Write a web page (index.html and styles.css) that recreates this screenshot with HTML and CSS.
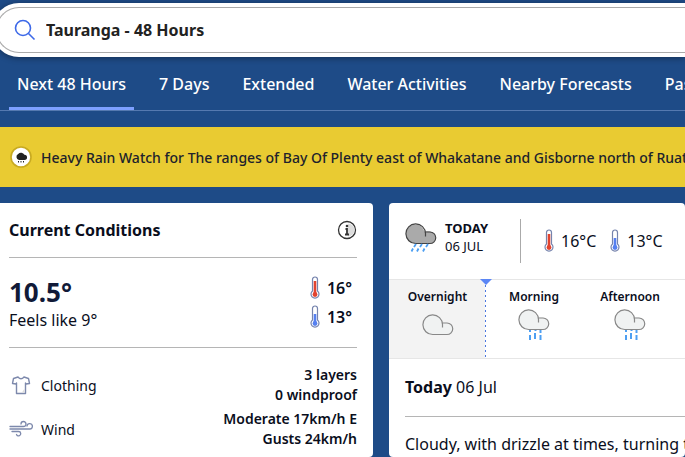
FILE: index.html
```html
<!DOCTYPE html>
<html lang="en">
<head>
    <meta charset="UTF-8">
    <meta name="viewport" content="width=device-width, initial-scale=1.0">
    <title>Tauranga - 48 Hours</title>
    <link rel="stylesheet" href="styles.css">
</head>
<body>
    <svg class="defs" aria-hidden="true">
        <symbol id="cloud" viewBox="0 0 32 22">
            <path d="M10.500 20.500A9.500 9.500 0 1 1 19.500 8.500Q24 7.500 27.500 9.500A6 6 0 0 1 25 20.500Z" stroke="none"/>
            <path d="M20.500 13.500V10.500A9.800 9.800 0 1 0 10.800 20.500H25A5.500 5.500 0 0 0 25 9H20.500" fill="none"/>
        </symbol>
        <symbol id="thermometer" viewBox="0 0 10 24">
            <path d="M2.500 15V3.500a2.500 2.500 0 0 1 5 0V15a4 4 0 1 1-5 0z" fill="#fff" stroke="#7583ad" stroke-width="1.200"/>
            <circle cx="5" cy="18.500" r="2.400" fill="currentColor"/>
        </symbol>
    </svg>
    <div class="page">
        <form class="search" action="#">
            <label class="search-box">
                <svg width="22" height="22" viewBox="0 0 22 22" fill="none" stroke="#3d69e8" stroke-width="1.600" role="img" aria-label="Search">
                    <circle cx="9" cy="9" r="7.500"/>
                    <path d="M14.500 14.500l6 6"/>
                </svg>
                <input type="text" value="Tauranga - 48 Hours">
            </label>
        </form>
        <nav class="tabs">
            <a class="tab active" href="#">Next 48 Hours</a>
            <a class="tab" href="#">7 Days</a>
            <a class="tab" href="#">Extended</a>
            <a class="tab" href="#">Water Activities</a>
            <a class="tab" href="#">Nearby Forecasts</a>
            <a class="tab" href="#">Past Weather</a>
        </nav>
        <a class="alert" href="#">
            <svg width="24" height="24" viewBox="0 0 24 24">
                <circle cx="12" cy="12" r="10" fill="#fff" stroke="#c8aa21" stroke-width="1.600"/>
                <path d="M10 15a3.200 3.200 0 0 1-.8-6 3.800 3.800 0 0 1 6.200.8 2.600 2.600 0 0 1 .1 5.200z" fill="#222"/>
                <path d="M9.500 16v1.500M12 16v1.500M14.500 16v1.500" stroke="#222"/>
            </svg>
            <span>Heavy Rain Watch for The ranges of Bay Of Plenty east of Whakatane and Gisborne north of Ruatoria</span>
        </a>
        <main class="cards">
            <section class="card current">
                <header class="card-head">
                    <h2>Current Conditions</h2>
                    <button class="info" type="button" aria-label="About current conditions">
                        <svg width="20" height="20" viewBox="0 0 20 20">
                            <circle cx="10" cy="10" r="8.500" fill="#fff" stroke="#333" stroke-width="1.300"/>
                            <path d="M11 3.500a6.500 6.500 0 0 1 0 13z" fill="#ddd"/>
                            <circle cx="10" cy="6" r="1.300" fill="#333"/>
                            <path d="M8.500 9H10v5.500M8 14.500h4" fill="none" stroke="#333" stroke-width="1.800"/>
                        </svg>
                    </button>
                </header>
                <div class="now">
                    <div>
                        <p class="temp">10.5°</p>
                        <p class="feels">Feels like 9°</p>
                    </div>
                    <div class="range">
                        <p>
                            <svg class="thermo high" width="10" height="24"><use href="#thermometer"/><path d="M5 5v13" stroke="currentColor" stroke-width="2.600"/></svg>
                            16°
                        </p>
                        <p>
                            <svg class="thermo low" width="10" height="24"><use href="#thermometer"/><path d="M5 9v9" stroke="currentColor" stroke-width="2.600"/></svg>
                            13°
                        </p>
                    </div>
                </div>
                <dl class="details">
                    <div class="detail">
                        <dt>
                            <svg width="24" height="20" viewBox="0 0 24 20" fill="#fff" stroke="#7d89ac" stroke-width="1.400" stroke-linejoin="round">
                                <path d="M9 2L4.500 3.500 3.500 8.500l3.500.5.500-1v10.500h9V8l.500 1 3.500-.5-1-5L15 2q-3 3.500-6 0z"/>
                                <path d="M13 17.500l2.500-4v4z" fill="#ddd" stroke="none"/>
                            </svg>
                            Clothing
                        </dt>
                        <dd>3 layers<br>0 windproof</dd>
                    </div>
                    <div class="detail">
                        <dt>
                            <svg width="24" height="20" viewBox="0 0 24 20" fill="none" stroke="#7d89ac" stroke-width="1.300" stroke-linecap="round">
                                <path d="M1 7.500h13.500a2.500 2.500 0 1 0-2.500-2.500"/>
                                <path d="M1 10h19.500a2.700 2.700 0 1 0-2.500-3"/>
                                <path d="M3 12.500h6.500a2.200 2.200 0 1 1-2 3"/>
                            </svg>
                            Wind
                        </dt>
                        <dd>Moderate 17km/h E<br>Gusts 24km/h</dd>
                    </div>
                </dl>
            </section>
            <section class="card forecast">
                <header class="day">
                    <svg class="day-icon" width="32" height="32" viewBox="0 0 32 32">
                        <use class="cloud dark" href="#cloud" width="32" height="22"/>
                        <path d="M11 21l-2 3M17 21l-2 3M23 21l-2 3M8 25.500l-1.500 3M13.500 25.500l-1.500 3M19.500 25.500l-1.500 3" stroke="#4d9ff2" stroke-width="1.800"/>
                    </svg>
                    <div class="date">
                        <strong>TODAY</strong>
                        <span>06 JUL</span>
                    </div>
                    <div class="day-range">
                        <span>
                            <svg class="thermo high" width="10" height="24"><use href="#thermometer"/><path d="M5 5v13" stroke="currentColor" stroke-width="2.600"/></svg>
                            16°C
                        </span>
                        <span>
                            <svg class="thermo low" width="10" height="24"><use href="#thermometer"/><path d="M5 9v9" stroke="currentColor" stroke-width="2.600"/></svg>
                            13°C
                        </span>
                    </div>
                </header>
                <div class="periods">
                    <div class="period past">
                        <h3>Overnight</h3>
                        <svg class="marker" width="12" height="6"><path d="M0 0h12L6 6z" fill="#5b86f5"/></svg>
                        <svg width="32" height="32" viewBox="0 -5 32 32"><use class="cloud" href="#cloud" width="32" height="22"/></svg>
                    </div>
                    <div class="period">
                        <h3>Morning</h3>
                        <svg width="32" height="32" viewBox="0 0 32 32">
                            <use class="cloud" href="#cloud" width="32" height="22"/>
                            <path d="M12 21v2M17.500 21v1M22.500 21v3M12 26v5M17 24v6M22.500 26v5" stroke="#4d9ff2" stroke-width="2"/>
                        </svg>
                    </div>
                    <div class="period">
                        <h3>Afternoon</h3>
                        <svg width="32" height="32" viewBox="0 0 32 32">
                            <use class="cloud" href="#cloud" width="32" height="22"/>
                            <path d="M12 21v2M17.500 21v1M22.500 21v3M12 26v5M17 24v6M22.500 26v5" stroke="#4d9ff2" stroke-width="2"/>
                        </svg>
                    </div>
                </div>
                <div class="summary">
                    <h2><strong>Today</strong> 06 Jul</h2>
                    <p>Cloudy, with drizzle at times, turning to rain</p>
                </div>
            </section>
        </main>
    </div>
</body>
</html>
```

FILE: styles.css
```css
* {box-sizing: border-box;}
body {margin: 0; overflow: hidden; background: #1e4b87; color: #0a0e1c; font-family: "Noto Sans", "Open Sans", sans-serif;}
h2, h3, p, dl, dd {margin: 0;}
a {text-decoration: none;}
svg {flex-shrink: 0;}
.defs {display: none;}
.page {margin-left: -8px; padding-top: 3px;}

.search {padding: 4px 0 4px 4px; background: #fff; border-radius: 27px 0 0 27px; box-shadow: 0 1px 6px rgba(0, 0, 0, .4);}
.search-box {display: flex; align-items: center; gap: 10px; height: 46px; padding-left: 17px; border: 1px solid #aaa; border-right: 0; border-radius: 23px 0 0 23px;}
.search-box input {flex: 1; min-width: 0; padding: 0; border: 0; outline: 0; background: none; color: #222; font: 700 16px "Noto Sans", sans-serif;}

.tabs {display: flex; gap: 17px; height: 54px; padding-left: 17px; border-bottom: 1px solid #5579b0; overflow: hidden;}
.tab {flex-shrink: 0; padding: 0 8px; color: #fff; font-size: 16px; font-weight: 500; line-height: 54px; white-space: nowrap;}
.tab.active {border-bottom: 3px solid #7da0ff;}

.alert {display: flex; align-items: center; gap: 8px; height: 60px; margin: 16px 0; padding-left: 17px; background: #e9cb32; color: #20222c; font-size: 14px; font-weight: 500; white-space: nowrap; overflow: hidden;}

.cards {display: grid; grid-template-columns: 381px 1fr; gap: 16px;}
.card {min-width: 0; min-height: 254px; background: #fff; border-radius: 4px; overflow: hidden;}
.current {padding: 0 16px 0 17px;}
.card-head {display: flex; justify-content: space-between; align-items: center; height: 55px; border-bottom: 1px solid #b5b5b5;}
.card-head h2 {font-size: 16px; font-weight: 700;}
.info {display: flex; padding: 0; border: 0; background: none;}
.now {display: flex; justify-content: space-between; align-items: center; height: 90px; border-bottom: 1px solid #b5b5b5;}
.temp {padding-top: 2px; color: #111a38; font-size: 26px; font-weight: 700; line-height: 32px;}
.feels {font-size: 16px; line-height: 24px;}
.range {padding-right: 5px;}
.range p {display: flex; align-items: center; gap: 7px; font-size: 16px; font-weight: 600; line-height: 29px;}
.thermo.high {color: #e2432f;}
.thermo.low {color: #5680f0;}
.details {padding-top: 15px;}
.detail {display: flex; justify-content: space-between; align-items: center; height: 44px;}
.detail dt {display: flex; align-items: center; gap: 8px; font-size: 14px;}
.detail dd {font-size: 14px; font-weight: 600; line-height: 20px; text-align: right;}

.day {display: flex; align-items: center; gap: 8px; height: 76px; padding-left: 16px;}
.day-icon {margin-bottom: 4px;}
.date {display: flex; flex-direction: column; width: 67px; padding-bottom: 8px; font-size: 13px; line-height: 18px;}
.date strong {font-weight: 700;}
.day-range {display: flex; align-items: center; gap: 14px; height: 44px; padding-left: 23px; border-left: 1px solid #aaa; font-size: 16px;}
.day-range span {display: flex; align-items: center; gap: 7px;}
.periods {display: flex; height: 80px; border: 1px solid #e6e6e6; border-width: 1px 0;}
.period {position: relative; display: flex; flex-direction: column; align-items: center; gap: 3px; width: 96px; padding-top: 8px;}
.period h3 {font-size: 12px; font-weight: 600; line-height: 18px;}
.period.past {width: 97px; background: repeating-linear-gradient(#4a76e0 0 2px, #fff 2px 5px) right / 1px 100% no-repeat #f3f3f3;}
.marker {position: absolute; top: -1px; right: -6px;}
.cloud {fill: #f0f2f2; stroke: #888; stroke-width: 1.2;}
.cloud.dark {fill: #aaa; stroke: #444;}
.summary {padding-left: 16px;}
.summary h2 {height: 58px; border-bottom: 1px solid #b5b5b5; font-size: 16px; font-weight: 400; line-height: 56px;}
.summary p {height: 40px; font-size: 16px; line-height: 54px; white-space: nowrap;}
```
